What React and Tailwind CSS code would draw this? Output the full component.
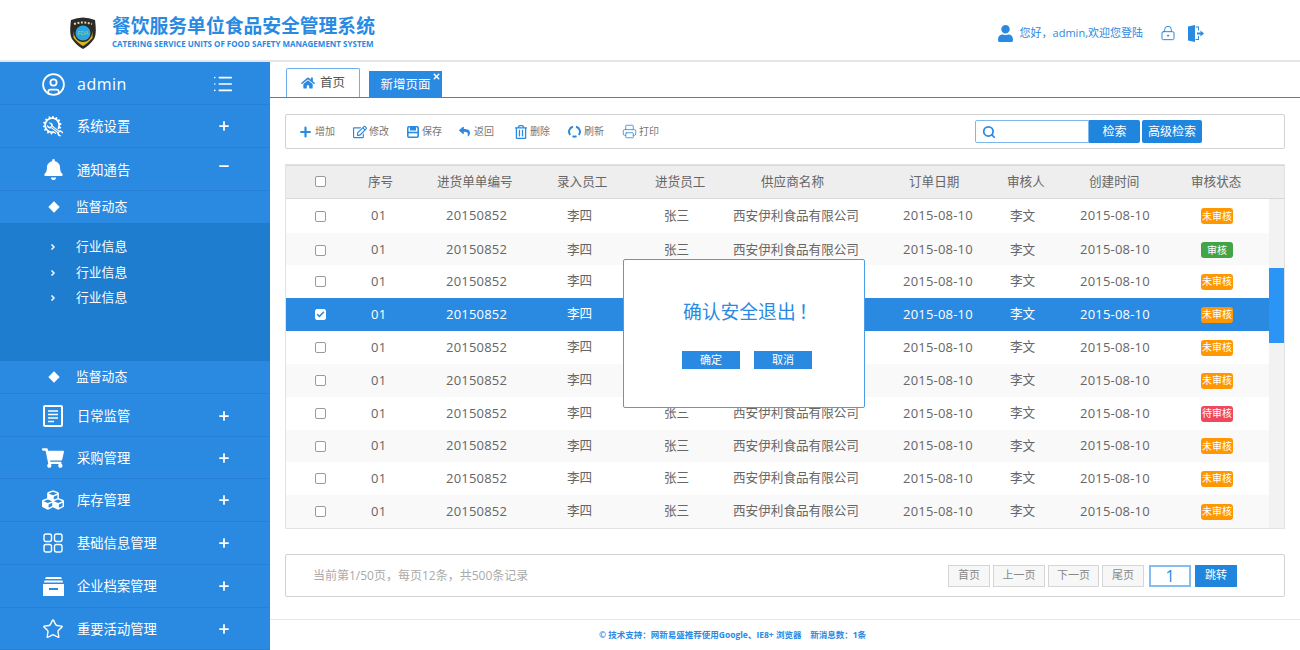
import { CircleUser, List, Star, Search, LockKeyhole, Printer, Plus, Minus, Check, X, ChevronRight } from 'lucide-react';
import { FaBell, FaShoppingCart, FaCubes, FaHome, FaRegEdit, FaReply, FaRegTrashAlt, FaUser } from 'react-icons/fa';
import { GiAutoRepair } from 'react-icons/gi';

const FONT = 'font-["Open_Sans","Noto_Sans_CJK_SC",sans-serif]';

// small drawings that the icon packages don't have
const DocIcon = () => (
  <svg width="20" height="22" viewBox="0 0 20 22" fill="none">
    <rect x="1" y="1" width="18" height="20" rx="1" stroke="white" strokeWidth="2" />
    <path d="M5 6h10M5 9.500h10M5 13h10M5 16.500h6" stroke="white" strokeWidth="1.500" />
  </svg>
);

const GridIcon = () => (
  <svg width="20" height="20" viewBox="0 0 20 20" fill="none" stroke="white" strokeWidth="1.400">
    <rect x="1" y="1" width="7.500" height="7.500" rx="2" />
    <rect x="11.500" y="1" width="7.500" height="7.500" rx="2" />
    <rect x="1" y="11.500" width="7.500" height="7.500" rx="2" />
    <rect x="11.500" y="11.500" width="7.500" height="7.500" rx="2" />
  </svg>
);

const DrawerIcon = () => (
  <svg width="21" height="19" viewBox="0 0 21 19" fill="white">
    <path d="M3 0h15l1 2H2zM1.500 3.500h18l.5 2H1zM0 7h21v12H0zM6 11v2h9v-2z" fillRule="evenodd" />
  </svg>
);

const SaveIcon = () => (
  <svg width="12" height="12" viewBox="0 0 12 12" fill="none">
    <rect x="0.800" y="0.800" width="10.400" height="10.400" rx="1.200" stroke="#2a8ae2" strokeWidth="1.600" />
    <path d="M3 1h6v3.500H3z" fill="#2a8ae2" />
    <path d="M1 6.500h10" stroke="#2a8ae2" strokeWidth="1.600" />
  </svg>
);

const RefreshIcon = () => (
  <svg width="13" height="13" viewBox="0 0 13 13" fill="none" stroke="#2a8ae2" strokeWidth="2">
    <path d="M2.200 9.800A5 5 0 0 1 5 1.700M8 1.700a5 5 0 0 1 2.800 8.100M8.500 11.200a5 5 0 0 1-4 0" />
  </svg>
);

const ExitIcon = () => (
  <svg width="16" height="17" viewBox="0 0 16 17" fill="#2a8ae2">
    <path d="M0 1.500L7 0v17l-7-1.500z" />
    <path d="M7.500 1.500H11v4h-1V2.500H7.500zM7.500 11H10v3H7.500v1H11v-4z" />
    <path d="M9 7.500h3.500V5.500L16 8.500l-3.500 3v-2H9z" />
  </svg>
);

const Logo = () => (
  <svg width="28" height="33" viewBox="0 0 28 33">
    <path d="M2 4 Q14 -1 26 4 Q28 18 25 23 Q20 30 14 33 Q8 30 3 23 Q0 18 2 4z" fill="#2c2a26" />
    <path d="M5 8 Q14 5 23 8" stroke="#d8d2b8" strokeWidth="2" strokeDasharray="2 1.500" fill="none" />
    <path d="M4.500 15 A9.500 11 0 0 0 23.500 15 L23.500 22 Q18 28 14 30 Q10 28 4.500 22z" fill="#d7b51e" />
    <circle cx="14" cy="17" r="7.500" fill="#2ba6e0" />
    <text x="14" y="19" textAnchor="middle" fontSize="5.500" fill="#9ed45a" fontFamily="Liberation Sans, sans-serif">FDA</text>
  </svg>
);

const menuBottom = [
  { label: '日常监管', icon: <DocIcon />, h: 'h-[43px] pt-[2px]' },
  { label: '采购管理', icon: <FaShoppingCart size={22} color="white" />, h: 'h-[42px] pt-[1px]' },
  { label: '库存管理', icon: <FaCubes size={22} color="white" />, h: 'h-[43px]' },
  { label: '基础信息管理', icon: <GridIcon />, h: 'h-[43px]' },
  { label: '企业档案管理', icon: <DrawerIcon />, h: 'h-[43px]' },
  { label: '重要活动管理', icon: <Star size={22} color="white" strokeWidth={1.500} />, h: 'h-[42px]' },
];

const tools = [
  { label: '增加', icon: <Plus size={16} color="#2a8ae2" strokeWidth={3.500} />, w: 'w-[54px]' },
  { label: '修改', icon: <FaRegEdit size={14} color="#2a8ae2" />, w: 'w-[53px]' },
  { label: '保存', icon: <SaveIcon />, w: 'w-[52px]' },
  { label: '返回', icon: <FaReply size={11} color="#2a8ae2" />, w: 'w-[56px]' },
  { label: '删除', icon: <FaRegTrashAlt size={14} color="#2a8ae2" />, w: 'w-[54px]' },
  { label: '刷新', icon: <RefreshIcon />, w: 'w-[55px]' },
  { label: '打印', icon: <Printer size={15} color="#2a8ae2" strokeWidth={1.300} />, w: 'w-[60px]' },
];

const headers = ['序号', '进货单单编号', '录入员工', '进货员工', '供应商名称', '订单日期', '审核人', '创建时间', '审核状态'];

const rows = [
  { h: 'h-[34px]', status: '未审核' },
  { h: 'h-[32px] pt-[2px]', alt: true, status: '审核' },
  { h: 'h-[33px]', status: '未审核' },
  { h: 'h-[33px]', selected: true, status: '未审核' },
  { h: 'h-[33px]', status: '未审核' },
  { h: 'h-[33px]', alt: true, status: '未审核' },
  { h: 'h-[33px]', status: '待审核' },
  { h: 'h-[32px]', alt: true, status: '未审核' },
  { h: 'h-[33px]', status: '未审核' },
  { h: 'h-[33px]', alt: true, status: '未审核' },
];

const badgeColor = {
  '未审核': 'bg-[#ff9800]',
  '审核': 'bg-[#43a446]',
  '待审核': 'bg-[#f0475c]',
};

const SideRow = ({ icon, label, sign, h = 'h-[43px]' }) => (
  <div className={`flex items-center ${h} border-b border-[#2580d6] pl-[42px] pr-[39px]`}>
    <span className="flex w-[22px] justify-center">{icon}</span>
    <span className="relative top-[1px] ml-[13px] flex-1 text-[13.300px] text-white">{label}</span>
    {sign === 'minus' ? (
      <Minus size={14} color="white" strokeWidth={3} className="mb-[7px]" />
    ) : (
      <Plus size={14} color="white" strokeWidth={3} />
    )}
  </div>
);

const SubRow = ({ label, h = 'h-[26px]' }) => (
  <div className={`flex ${h} items-center pl-[49px]`}>
    <ChevronRight size={8} color="white" strokeWidth={5} />
    <span className="ml-[19px] text-[12.800px] text-white">{label}</span>
  </div>
);

const Checkbox = ({ checked }) => (
  <span className={`flex h-[11px] w-[11px] items-center justify-center rounded-[2px] border ${checked ? 'border-white bg-white' : 'border-[#9a9a9a] bg-white'}`}>
    {checked && <Check size={9} color="#2a8ae2" strokeWidth={4} />}
  </span>
);

const PageBtn = ({ children, w }) => (
  <span className={`flex h-[22px] ${w} items-center justify-center border border-[#d5d5d5] bg-[#f7f7f7] text-[11px] text-[#888]`}>
    {children}
  </span>
);

export default function App() {
  return (
    <div className={`h-[650px] w-[1300px] overflow-hidden bg-white ${FONT}`}>
      {/* top bar */}
      <header className="flex h-[62px] items-center border-b-2 border-[#e6e6e6] pl-[69px] pr-[96px]">
        <span className="mt-[5px] flex"><Logo /></span>
        <div className="ml-[15px] flex flex-col pt-[3px]">
          <span className="text-[18.800px] leading-[24px] font-bold text-[#2a8ae2]">餐饮服务单位食品安全管理系统</span>
          <span className="text-[8px] leading-[11px] font-bold text-[#2a8ae2]">CATERING SERVICE UNITS OF FOOD SAFETY MANAGEMENT SYSTEM</span>
        </div>
        <div className="ml-auto mt-[6px] flex items-center">
          <FaUser size={17} color="#2a8ae2" />
          <span className="ml-[6px] text-[11px] text-[#2a8ae2]">您好，admin,欢迎您登陆</span>
          <LockKeyhole size={16} color="#2a8ae2" strokeWidth={1.500} className="ml-[17px]" />
          <span className="ml-[12px] flex"><ExitIcon /></span>
        </div>
      </header>

      <div className="flex h-[588px]">
        {/* side menu */}
        <aside className="w-[270px] shrink-0 bg-[#2a8ae2]">
          <div className="flex h-[43px] items-center border-b border-[#2580d6] pl-[41px] pr-[36px] pt-[2px]">
            <CircleUser size={25} color="white" strokeWidth={1.700} />
            <span className="ml-[11px] flex-1 text-[16px] tracking-[0.500px] text-white">admin</span>
            <List size={22} color="white" strokeWidth={1.800} />
          </div>
          <SideRow icon={<GiAutoRepair size={24} color="white" />} label="系统设置" />
          <SideRow
            icon={<FaBell size={21} color="white" />}
            label={<span className="relative top-[1px]">通知通告</span>}
            sign="minus"
          />
          <div className="flex h-[32px] items-center pl-[50px]">
            <span className="h-[8px] w-[8px] rotate-45 bg-white" />
            <span className="ml-[18px] text-[12.800px] text-white">监督动态</span>
          </div>
          <div className="h-[138px] bg-[#1f7dd0] pt-[11px]">
            <SubRow label="行业信息" />
            <SubRow label="行业信息" h="h-[25px]" />
            <SubRow label="行业信息" />
          </div>
          <div className="flex h-[33px] items-center border-b border-[#2580d6] pl-[50px]">
            <span className="h-[8px] w-[8px] rotate-45 bg-white" />
            <span className="ml-[18px] text-[12.800px] text-white">监督动态</span>
          </div>
          {menuBottom.map((m) => (
            <SideRow key={m.label} icon={m.icon} label={m.label} h={m.h} />
          ))}
        </aside>

        {/* content */}
        <main className="relative flex-1">
          <div className="flex h-[36px] items-end border-b border-[#2a8ae2] pl-[16px]">
            <div className="flex h-[29px] w-[74px] items-center justify-center gap-[5px] rounded-t-[2px] border border-b-0 border-[#6fb0ec] bg-white text-[12.500px] text-[#555]">
              <FaHome size={14} color="#2a8ae2" />
              首页
            </div>
            <div className="relative ml-[9px] flex h-[26px] w-[73px] items-center justify-center bg-[#2a8ae2] pt-[2px] text-[12.500px] text-white">
              新增页面
              <X size={9} color="white" strokeWidth={4} className="absolute top-[1px] right-[1px]" />
            </div>
          </div>

          <div className="px-[15px]">
            {/* toolbar */}
            <div className="mt-[16px] flex h-[35px] items-center rounded-[2px] border border-[#d2d2d2] pl-[12px]">
              {tools.map((t) => (
                <div key={t.label} className={`flex items-center ${t.w}`}>
                  <span className="flex w-[15px] justify-center">{t.icon}</span>
                  <span className="ml-[2px] text-[10px] text-[#777]">{t.label}</span>
                </div>
              ))}
              <div className="ml-auto mr-[82px] flex items-center">
                <div className="flex h-[23px] w-[114px] items-center rounded-l-[2px] border border-[#7cb8ef] pl-[6px]">
                  <Search size={14} color="#2a8ae2" strokeWidth={3} />
                </div>
                <span className="flex h-[23px] w-[51px] items-center justify-center rounded-r-[2px] bg-[#1f85dd] text-[12px] text-white">检索</span>
                <span className="ml-[2px] flex h-[23px] w-[60px] items-center justify-center rounded-[2px] bg-[#1f85dd] text-[12px] text-white">高级检索</span>
              </div>
            </div>

            {/* table */}
            <div className="relative mt-[15px] h-[365px] border border-[#e2e2e2] text-[12.600px] text-[#666]">
              <div className="grid h-[34px] grid-cols-[53px_69px_120px_98px_106px_148px_98px_82px_102px_1fr] items-center border-b border-[#d8d8d8] bg-[#eeeeee] pl-[29px] shadow-[inset_0_1px_0_#d8d8d8]">
                <Checkbox />
                {headers.map((h) => (
                  <span key={h} className="relative top-[1px] whitespace-nowrap">{h}</span>
                ))}
              </div>
              <div className="flex">
                <div className="flex-1">
                  {rows.map((r, i) => (
                    <div
                      key={i}
                      className={`grid ${r.h} grid-cols-[56px_75px_121px_97px_69px_170px_107px_70px_121px_1fr] items-center pl-[29px] ${r.selected ? 'bg-[#2a8ae2] text-white' : r.alt ? 'bg-[#f9f9f9]' : 'bg-white'}`}
                    >
                      <Checkbox checked={r.selected} />
                      <span className="text-[13px] tracking-[0.300px]">01</span>
                      <span className="text-[13px] tracking-[0.200px]">20150852</span>
                      <span>李四</span>
                      <span>张三</span>
                      <span className="whitespace-nowrap">西安伊利食品有限公司</span>
                      <span className="text-[13px] tracking-[0.200px] whitespace-nowrap">2015-08-10</span>
                      <span>李文</span>
                      <span className="text-[13px] tracking-[0.200px] whitespace-nowrap">2015-08-10</span>
                      <span className={`flex h-[16px] w-[32px] items-center justify-center rounded-[3px] text-[10px] text-white ${badgeColor[r.status]}`}>
                        {r.status}
                      </span>
                    </div>
                  ))}
                </div>
                <div className="w-[15px] bg-[#f2f2f2] pt-[69px]">
                  <div className="h-[75px] bg-[#2b95f5]" />
                </div>
              </div>
            </div>

            {/* pagination */}
            <div className="mt-[25px] flex h-[43px] items-center rounded-[2px] border border-[#d2d2d2] pl-[27px] pr-[47px]">
              <span className="text-[12px] text-[#aaa]">当前第1/50页，每页12条，共500条记录</span>
              <div className="ml-auto flex items-center gap-[3px]">
                <PageBtn w="w-[42px]">首页</PageBtn>
                <PageBtn w="w-[52px]">上一页</PageBtn>
                <PageBtn w="w-[51px]">下一页</PageBtn>
                <PageBtn w="w-[42px]">尾页</PageBtn>
                <span className="ml-[2px] flex h-[22px] w-[42px] items-center justify-center border-2 border-[#85bdf0] text-[16px] text-[#2a8ae2]">1</span>
                <span className="ml-[1px] flex h-[22px] w-[42px] items-center justify-center bg-[#1f85dd] text-[11px] text-white">跳转</span>
              </div>
            </div>
          </div>

          <footer className="mt-[22px] flex h-[31px] items-center border-t border-[#e6e6e6] pl-[329px] text-[8.500px] font-bold whitespace-pre text-[#2a8ae2]">
            © 技术支持：网新易盛推荐使用Google、IE8+ 浏览器    新消息数：1条
          </footer>

          {/* logout confirm dialog */}
          <div className="absolute top-[197px] left-[353px] flex h-[149px] w-[242px] flex-col items-center rounded-[2px] border border-[#4a9de8] bg-white pl-[6px]">
            <span className="mt-[40px] ml-[53px] self-start text-[18.800px] leading-[24px] whitespace-nowrap text-[#2a8ae2]">
              确认安全退出<span className="ml-[3px]">！</span>
            </span>
            <div className="mt-[27px] flex gap-[14px]">
              <span className="flex h-[18px] w-[58px] items-center justify-center bg-[#2a8ae2] text-[11px] text-white">确定</span>
              <span className="flex h-[18px] w-[58px] items-center justify-center bg-[#2a8ae2] text-[11px] text-white">取消</span>
            </div>
          </div>
        </main>
      </div>
    </div>
  );
}
